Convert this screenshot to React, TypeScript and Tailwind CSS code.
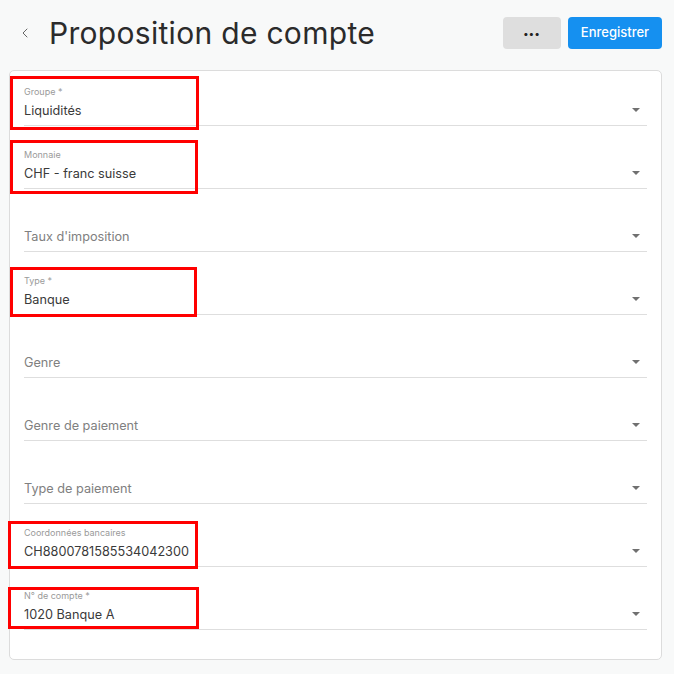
import { ChevronLeft } from 'lucide-react';

type Field = { label: string; value?: string };

const fields: Field[] = [
  { label: 'Groupe *', value: 'Liquidités' },
  { label: 'Monnaie', value: 'CHF - franc suisse' },
  { label: "Taux d'imposition" },
  { label: 'Type *', value: 'Banque' },
  { label: 'Genre' },
  { label: 'Genre de paiement' },
  { label: 'Type de paiement' },
  { label: 'Coordonnées bancaires', value: 'CH8800781585534042300' },
  { label: 'N° de compte *', value: '1020 Banque A' },
];

// annotation boxes drawn over the form
const marks = [
  'left-[10px] top-[76px] w-[189px] h-[54px]',
  'left-[10px] top-[140px] w-[188px] h-[54px]',
  'left-[10px] top-[267px] w-[187px] h-[50px]',
  'left-[8px] top-[521px] w-[190px] h-[48px]',
  'left-[8px] top-[587px] w-[191px] h-[42px]',
];

function SelectField({ field }: { field: Field }) {
  return (
    <div className="relative h-[55px] border-b border-[#dedede]">
      {field.value ? (
        <>
          <div className="absolute left-0 top-[16px] text-[9px] leading-[10px] text-[#9a9a9a]">
            {field.label}
          </div>
          <div className="absolute left-0 top-[31px] text-[12.7px] leading-[18px] text-[#3a3a3a]">
            {field.value}
          </div>
        </>
      ) : (
        <div className="absolute left-0 top-[31px] text-[12.7px] leading-[18px] text-[#808080]">
          {field.label}
        </div>
      )}
      <span className="absolute right-[7px] top-[37px] h-0 w-0 border-x-[4px] border-t-[4px] border-x-transparent border-t-[#707070]" />
    </div>
  );
}

export default function App() {
  return (
    <div
      className="relative min-h-[674px] w-[674px] bg-[#f8f9f9]"
      style={{ fontFamily: 'Inter, "Noto Sans", sans-serif' }}
    >
      <header className="flex h-[66px] items-center pl-[17px] pr-[12px]">
        <ChevronLeft className="h-[16px] w-[16px] text-[#666]" strokeWidth={1.5} />
        <h1 className="ml-[16px] text-[30px] font-normal leading-none tracking-[0.3px] text-[#2b2b2b]">
          Proposition de compte
        </h1>
        <div className="ml-auto flex gap-[7px]">
          <button className="flex h-[32px] w-[58px] items-center justify-center rounded-[4px] bg-[#dedede] text-[10px] font-bold leading-none tracking-[1px] text-[#222]">
            •••
          </button>
          <button className="h-[32px] w-[94px] rounded-[4px] bg-[#1590f0] text-[13px] font-medium text-white">
            Enregistrer
          </button>
        </div>
      </header>

      <div className="ml-[9px] mr-[12px] mt-[4px] flex flex-col gap-[8px] rounded-[5px] border border-[#dcdcdc] bg-white px-[14px] pb-[29px]">
        {fields.map((f) => (
          <SelectField key={f.label} field={f} />
        ))}
      </div>

      {marks.map((m) => (
        <div key={m} className={`absolute border-[3px] border-[#ff0000] ${m}`} />
      ))}
    </div>
  );
}
